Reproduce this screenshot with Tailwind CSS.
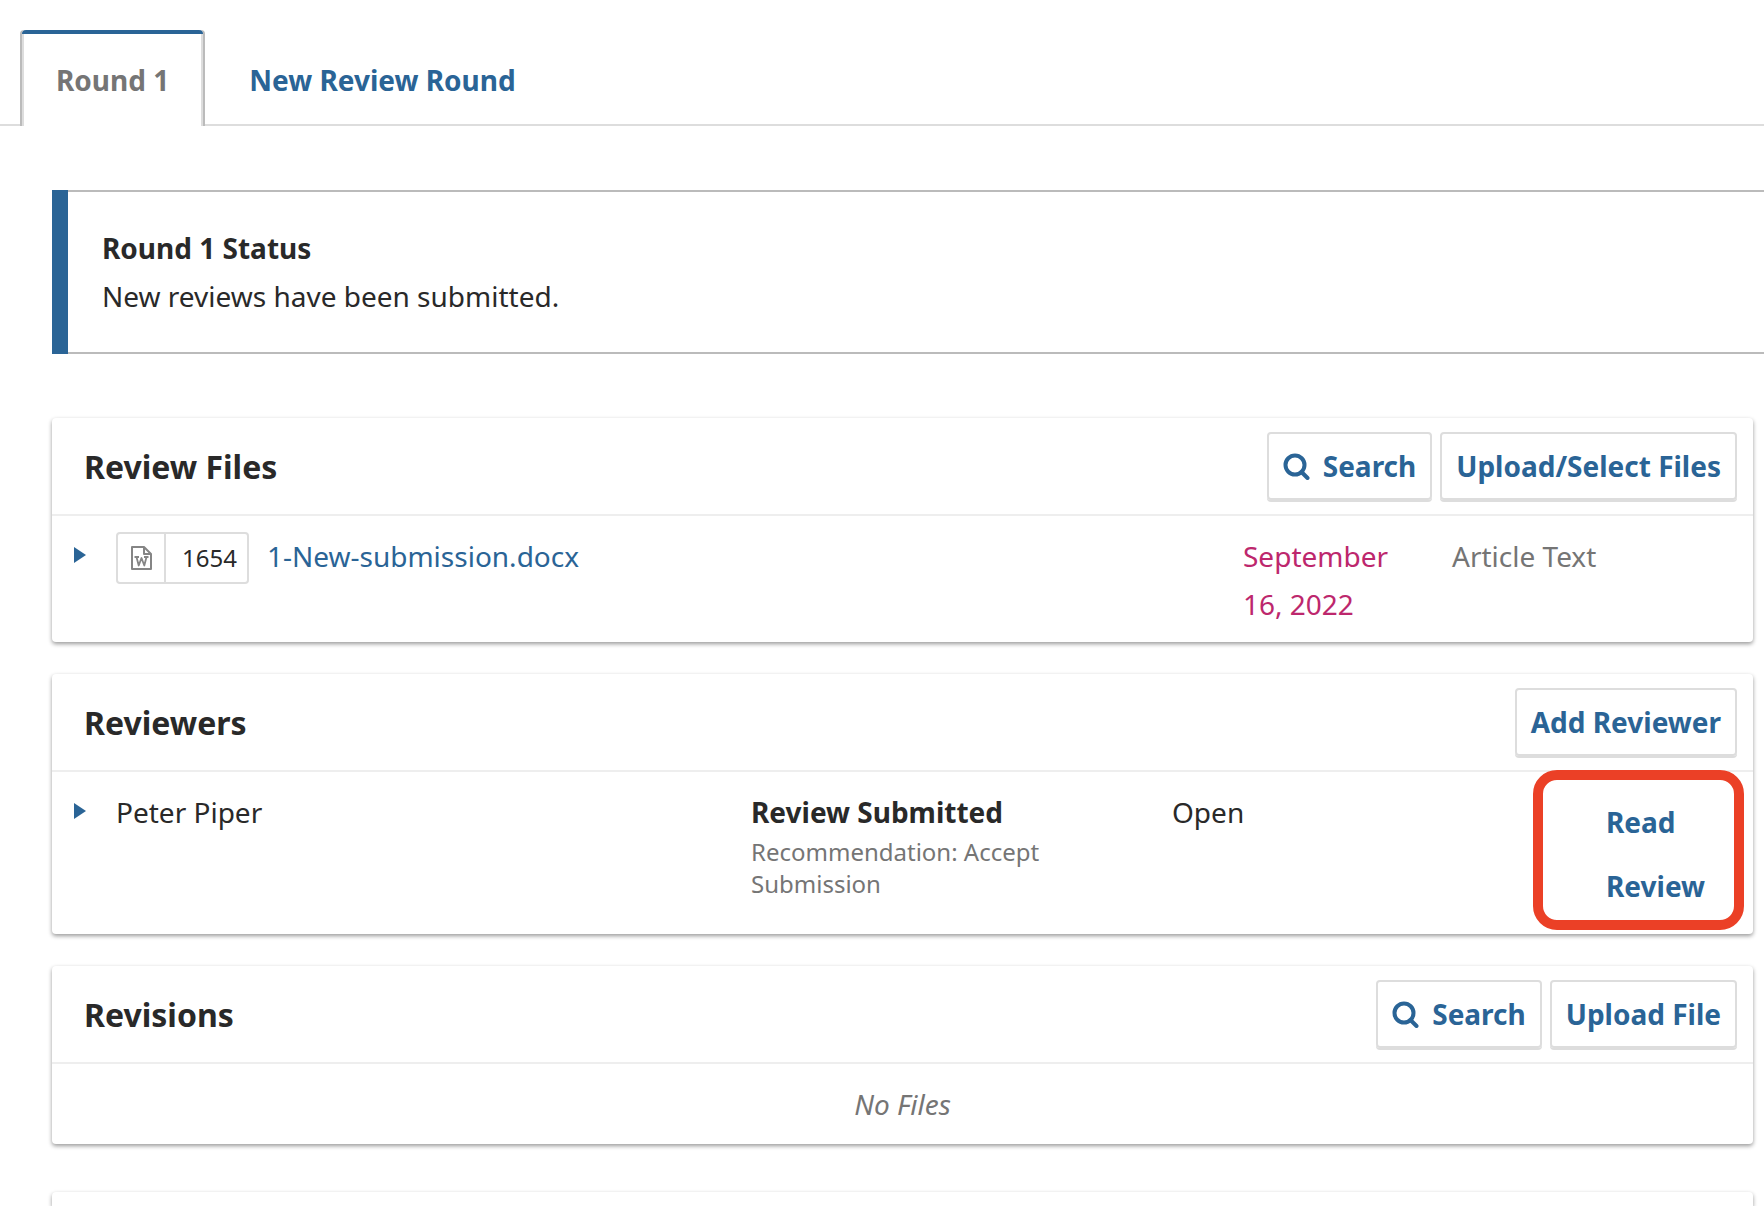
<!DOCTYPE html>
<html lang="en">
<head>
<meta charset="utf-8">
<meta name="viewport" content="width=device-width, initial-scale=1">
<title>Review Round 1</title>
<script src="https://cdn.jsdelivr.net/npm/@tailwindcss/browser@4"></script>
</head>
<body class="flex min-h-screen flex-col overflow-x-hidden bg-white font-['Noto_Sans',sans-serif] text-[28px] leading-[48px] text-[#292929]">
  <nav class="flex border-b-2 border-[#ddd] pt-[30px] pl-5 font-bold leading-[88px]" aria-label="Review rounds">
    <a href="#round-1" aria-current="page" class="relative -mb-[2px] flex h-24 rounded-t border-x-2 border-[#bbb] bg-white px-[34px] pt-[6px] text-[#757575] shadow-[inset_2px_0_#ddd,inset_-2px_0_#ddd]">
      <span class="absolute inset-x-0 top-0 h-1 rounded-t bg-[#2a6496]"></span>Round 1</a>
    <a href="#new-round" class="ml-2 px-9 pt-[6px] text-[#2a6496]">New Review Round</a>
  </nav>

  <main id="round-1" class="flex flex-1 flex-col pt-16 pl-[52px]">
    <section class="flex">
      <div class="w-4 bg-[#2a6496]"></div>
      <div class="flex-1 border-y-2 border-[#bbb] px-[34px] py-8">
        <h2 class="font-bold">Round 1 Status</h2>
        <p>New reviews have been submitted.</p>
      </div>
    </section>

    <div class="flex flex-1 flex-col pt-16 pr-[11px]">
      <section class="rounded shadow-[0_2px_4px_rgba(0,0,0,0.4)]">
        <header class="flex items-center border-b-2 border-[#eee] py-[14px] pr-4 pl-8">
          <h3 class="flex-1 pt-0.5 text-[32px] font-bold">Review Files</h3>
          <div class="flex gap-2 font-bold leading-[64px] text-[#2a6496]">
            <button type="button" class="flex items-center gap-3 rounded border-2 border-[#ddd] px-[14px] shadow-[0_2px_#ddd]">
              <svg class="size-7" viewBox="0 0 28 28" fill="none" stroke="currentColor" stroke-width="4" stroke-linecap="round" aria-hidden="true"><circle cx="12" cy="13" r="9.500"/><path d="M18.500 20 24.500 26"/></svg>Search</button>
            <button type="button" class="rounded border-2 border-[#ddd] px-[14px] shadow-[0_2px_#ddd]">Upload/Select Files</button>
          </div>
        </header>
        <table class="w-full table-fixed text-left">
          <colgroup><col><col class="w-[209px]"><col class="w-[301px]"></colgroup>
          <tr class="align-top">
            <td class="pt-4 pb-[14px] pl-[22px]">
              <div class="flex">
                <button type="button" aria-label="Show details" class="mt-[15px] mr-[30px] h-4 w-3 bg-[#2a6496] [clip-path:polygon(0_0,100%_50%,0_100%)]"></button>
                <span class="mr-[18px] flex h-[52px] rounded border-2 border-[#ddd] text-2xl leading-[48px]">
                  <span class="flex w-12 items-center justify-center border-r-2 border-[#ddd] text-[#858585]">
                    <svg class="h-6 w-[21px]" viewBox="0 0 21 24" fill="none" stroke="currentColor" stroke-width="2" stroke-linejoin="round" aria-hidden="true"><path d="M1 1H13L20 8V23H1ZM13 1V8H20"/><path stroke-width="1.800" d="M3.500 11H8M13 11H17.500M5.500 11 7.700 19.500 10.500 12 13.300 19.500 15.500 11"/></svg>
                  </span>
                  <span class="pr-[10px] pl-4">1654</span>
                </span>
                <a href="#file" class="text-[#2a6496]">1-New-submission.docx</a>
              </div>
            </td>
            <td class="pt-4 pb-[14px] pr-8 text-[#bd276d]">September 16, 2022</td>
            <td class="pt-4 pb-[14px] text-[#757575]">Article Text</td>
          </tr>
        </table>
      </section>

      <section class="mt-8 rounded shadow-[0_2px_4px_rgba(0,0,0,0.4)]">
        <header class="flex items-center border-b-2 border-[#eee] py-[14px] pr-4 pl-8">
          <h3 class="flex-1 pt-0.5 text-[32px] font-bold">Reviewers</h3>
          <button type="button" class="rounded border-2 border-[#ddd] px-[14px] font-bold leading-[64px] text-[#2a6496] shadow-[0_2px_#ddd]">Add Reviewer</button>
        </header>
        <div class="relative">
          <table class="w-full table-fixed text-left">
            <colgroup><col><col class="w-[421px]"><col class="w-[434px]"><col class="w-[147px]"></colgroup>
            <tr class="align-top">
              <td class="pt-4 pl-[22px]">
                <div class="flex">
                  <button type="button" aria-label="Show details" class="mt-[15px] mr-[30px] h-4 w-3 bg-[#2a6496] [clip-path:polygon(0_0,100%_50%,0_100%)]"></button>
                  Peter Piper
                </div>
              </td>
              <td class="pt-4 pr-24">
                <strong class="block font-bold">Review Submitted</strong>
                <span class="block text-2xl leading-8 text-[#757575]">Recommendation: Accept Submission</span>
              </td>
              <td class="pt-4">Open</td>
              <td class="pt-[18px] pr-8 pb-4"><a href="#read-review" class="block font-bold leading-[64px] text-[#2a6496]">Read Review</a></td>
            </tr>
          </table>
          <!-- Highlight around the review link -->
          <div class="pointer-events-none absolute -top-[2px] right-[9px] h-40 w-[211px] rounded-3xl border-10 border-[#eb4026]"></div>
        </div>
      </section>

      <section class="mt-8 rounded shadow-[0_2px_4px_rgba(0,0,0,0.4)]">
        <header class="flex items-center border-b-2 border-[#eee] py-[14px] pr-4 pl-8">
          <h3 class="flex-1 pt-0.5 text-[32px] font-bold">Revisions</h3>
          <div class="flex gap-2 font-bold leading-[64px] text-[#2a6496]">
            <button type="button" class="flex items-center gap-3 rounded border-2 border-[#ddd] px-[14px] shadow-[0_2px_#ddd]">
              <svg class="size-7" viewBox="0 0 28 28" fill="none" stroke="currentColor" stroke-width="4" stroke-linecap="round" aria-hidden="true"><circle cx="12" cy="13" r="9.500"/><path d="M18.500 20 24.500 26"/></svg>Search</button>
            <button type="button" class="rounded border-2 border-[#ddd] px-[14px] shadow-[0_2px_#ddd]">Upload File</button>
          </div>
        </header>
        <p class="py-4 text-center text-[#757575] italic">No Files</p>
      </section>

      <section class="mt-12 flex-1 rounded-t shadow-[0_2px_4px_rgba(0,0,0,0.4)]"></section>
    </div>
  </main>
</body>
</html>
